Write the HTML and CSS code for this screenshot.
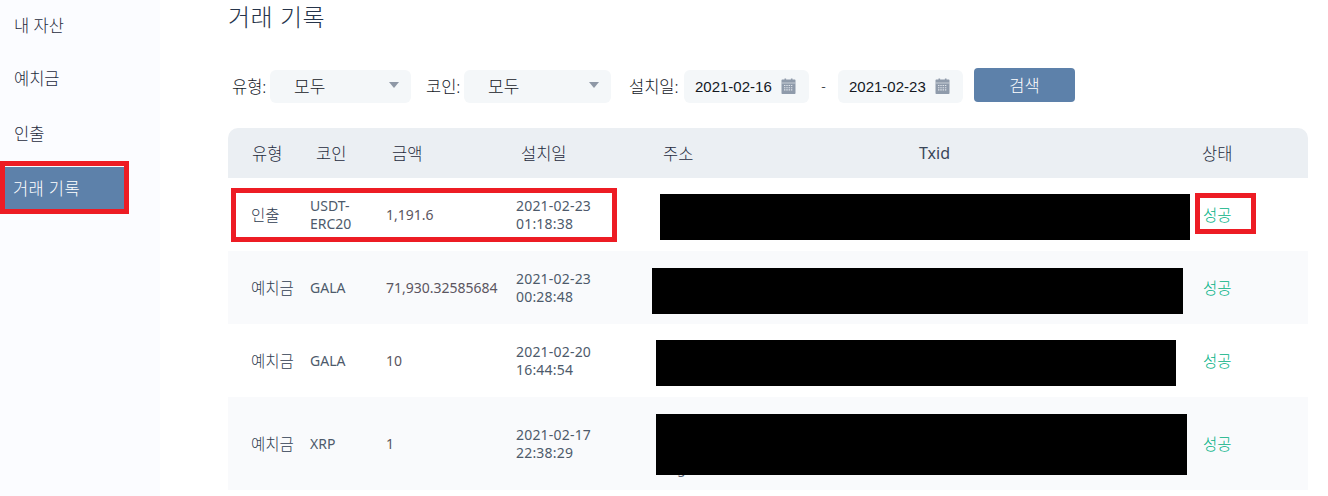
FILE: index.html
```html
<!DOCTYPE html>
<html lang="ko">
<head>
    <meta charset="UTF-8">
    <meta name="viewport" content="width=device-width, initial-scale=1.0">
    <title>거래 기록</title>
    <link rel="stylesheet" href="styles.css">
</head>
<body>
    <div class="page">
        <div class="sidebar">
            <a class="menu-item first">내 자산</a>
            <a class="menu-item">예치금</a>
            <a class="menu-item">인출</a>
            <a class="menu-item active">거래 기록</a>
        </div>

        <div class="main">
            <h1 class="title">거래 기록</h1>

            <div class="filters">
                <span class="label">유형:</span>
                <div class="select type-select">모두<i class="arrow"></i></div>
                <span class="label coin-label">코인:</span>
                <div class="select coin-select">모두<i class="arrow"></i></div>
                <span class="label date-label">설치일:</span>
                <div class="date">2021-02-16
                    <svg class="cal" viewBox="0 0 15 16"><path d="M1.5 1.5H3.5V.5h1.6v1h4.8v-1h1.6v1h2c.6 0 1 .4 1 1V15c0 .6-.4 1-1 1h-12c-.6 0-1-.4-1-1V2.500c0-.6.4-1 1-1z" fill="#8f9bab"/><path d="M.5 5h14" stroke="#dfe4ea" stroke-width=".7"/><path d="M3 7.500h9M3 9.700h9M3 11.900h9" stroke="#dfe4ea" stroke-width="1.100" stroke-dasharray="1.400 .9"/></svg>
                </div>
                <span class="dash">-</span>
                <div class="date">2021-02-23
                    <svg class="cal" viewBox="0 0 15 16"><path d="M1.5 1.5H3.5V.5h1.6v1h4.8v-1h1.6v1h2c.6 0 1 .4 1 1V15c0 .6-.4 1-1 1h-12c-.6 0-1-.4-1-1V2.500c0-.6.4-1 1-1z" fill="#8f9bab"/><path d="M.5 5h14" stroke="#dfe4ea" stroke-width=".7"/><path d="M3 7.500h9M3 9.700h9M3 11.900h9" stroke="#dfe4ea" stroke-width="1.100" stroke-dasharray="1.400 .9"/></svg>
                </div>
                <button class="search-btn">검색</button>
            </div>

            <div class="table">
                <div class="thead">
                    <span class="th-type">유형</span>
                    <span class="th-coin">코인</span>
                    <span class="th-amount">금액</span>
                    <span class="th-date">설치일</span>
                    <span class="th-addr">주소</span>
                    <span class="th-txid">Txid</span>
                    <span class="th-status">상태</span>
                </div>

                <div class="row">
                    <span class="c-type">인출</span>
                    <span class="c-coin">USDT-<br>ERC20</span>
                    <span class="c-amount">1,191.6</span>
                    <span class="c-date">2021-02-23<br>01:18:38</span>
                    <span class="c-status">성공</span>
                    <div class="mask mask1"></div>
                    <div class="mark mark-row"></div>
                    <div class="mark mark-status"></div>
                </div>
                <div class="row alt">
                    <span class="c-type">예치금</span>
                    <span class="c-coin">GALA</span>
                    <span class="c-amount">71,930.32585684</span>
                    <span class="c-date">2021-02-23<br>00:28:48</span>
                    <span class="c-status">성공</span>
                    <div class="mask mask2"></div>
                </div>
                <div class="row">
                    <span class="c-type">예치금</span>
                    <span class="c-coin">GALA</span>
                    <span class="c-amount">10</span>
                    <span class="c-date">2021-02-20<br>16:44:54</span>
                    <span class="c-status">성공</span>
                    <div class="mask mask3"></div>
                </div>
                <div class="row alt last">
                    <span class="c-type">예치금</span>
                    <span class="c-coin">XRP</span>
                    <span class="c-amount">1</span>
                    <span class="c-date">2021-02-17<br>22:38:29</span>
                    <span class="c-status">성공</span>
                    <span class="addr-tail">g</span>
                    <div class="mask mask4"></div>
                </div>
            </div>
        </div>
    </div>
    <div class="mark mark-menu"></div>
</body>
</html>
```

FILE: styles.css
```css
*{
    box-sizing: border-box;
    margin: 0px;
    padding: 0px;
}
body{
    font-family: "Noto Sans", "Noto Sans CJK KR", sans-serif;
    background-color: #fff;
    color: #1f304a;
    overflow: hidden;
}
.page{
    display: flex;
    width: 1328px;
    height: 496px;
}

/* left menu */
.sidebar{
    width: 160px;
    flex-shrink: 0;
    background-color: #fbfcff;
}
.menu-item{
    display: flex;
    align-items: center;
    height: 55px;
    padding-left: 14px;
    font-size: 16.5px;
    font-weight: 300;
    color: #1f2b3d;
}
.menu-item.first{
    height: 50px;
}
.menu-item.active{
    width: 119px;
    height: 42px;
    margin: 7px 0 0 5px;
    padding-left: 8px;
    letter-spacing: .4px;
    color: #fff;
    background-color: #5d81aa;
}

/* content */
.main{
    width: 1080px;
    margin-left: 68px;
}
.title{
    height: 68px;
    font-size: 24px;
    line-height: 34px;
    font-weight: 300;
    letter-spacing: .5px;
    color: #26344a;
}
.filters{
    display: flex;
    align-items: center;
    height: 35px;
    padding-left: 4px;
    font-size: 16.5px;
    font-weight: 300;
    color: #14181f;
}
.label{
    width: 38px;
    white-space: nowrap;
}
.coin-label{
    margin-left: 15px;
}
.date-label{
    width: 55px;
    margin-left: 18px;
}
.select{
    position: relative;
    width: 141px;
    height: 33px;
    margin-top: 1px;
    padding-left: 24px;
    line-height: 33px;
    font-size: 17px;
    background-color: #f4f7f9;
    border-radius: 6px;
}
.coin-select{
    width: 147px;
}
.arrow{
    position: absolute;
    top: 12px;
    right: 12px;
    width: 0px;
    height: 0px;
    border-left: 5.5px solid transparent;
    border-right: 5.5px solid transparent;
    border-top: 6px solid #8e98a6;
}
.date{
    display: flex;
    align-items: center;
    justify-content: space-between;
    width: 125px;
    height: 33px;
    margin-top: 1px;
    padding: 0 13px 0 11px;
    font-family: "Liberation Sans", sans-serif;
    font-size: 15px;
    font-weight: 400;
    background-color: #f4f7f9;
    border-radius: 6px;
}
.cal{
    width: 15px;
    height: 16px;
}
.dash{
    width: 29px;
    text-align: center;
    font-size: 14px;
}
.search-btn{
    width: 101px;
    height: 34px;
    margin: -2px 0 0 11px;
    font-family: inherit;
    font-size: 16.5px;
    font-weight: 300;
    color: #fff;
    background-color: #5d81aa;
    border: none;
    border-radius: 4px;
}

/* table */
.table{
    margin-top: 25px;
    font-size: 14px;
}
.thead{
    position: relative;
    height: 50px;
    background-color: #ebeff3;
    border-radius: 10px 10px 0 0;
    font-size: 16.5px;
    font-weight: 300;
    color: #1f2b3d;
    display: flex;
    align-items: center;
    padding-left: 24px;
}
.th-type{ width: 64px; }
.th-coin{ width: 76px; }
.th-amount{ width: 129px; }
.th-date{ width: 142px; }
.th-addr{ width: 256px; }
.th-txid{ width: 283px; font-size: 16px; font-weight: 400; color: #3a4658; }
.row{
    position: relative;
    display: flex;
    align-items: center;
    height: 73px;
    padding-left: 23px;
    line-height: 18px;
    color: #4d5a6b;
    background-color: #fff;
}
.row.alt{
    background-color: #f9fafc;
}
.row.last{
    height: 93px;
}
.c-type{ width: 59px; font-size: 15.500px; font-weight: 300; color: #2f3c50; }
.c-coin{ width: 76px; }
.c-amount{ width: 130px; color: #5b5560; }
.c-date{ width: 687px; letter-spacing: .2px; }
.c-status{ font-size: 15.500px; font-weight: 300; color: #00b184; }
.addr-tail{
    position: absolute;
    left: 449px;
    top: 62px;
    color: #4d5a6b;
}

/* redaction and annotation boxes drawn on top of the screenshot */
.mask{
    position: absolute;
    background-color: #000;
}
.mask1{ left: 432px; top: 16px; width: 530px; height: 46px; }
.mask2{ left: 424px; top: 17px; width: 531px; height: 46px; }
.mask3{ left: 428px; top: 16px; width: 520px; height: 46px; }
.mask4{ left: 428px; top: 17px; width: 531px; height: 61px; }
.mark{
    position: absolute;
    border: 5px solid #ed1c24;
}
.mark-row{ left: 3px; top: 10px; width: 386px; height: 54px; }
.mark-status{ left: 967px; top: 15px; width: 61px; height: 41px; }
.mark-menu{ left: 0px; top: 161px; width: 129px; height: 53px; }
```
